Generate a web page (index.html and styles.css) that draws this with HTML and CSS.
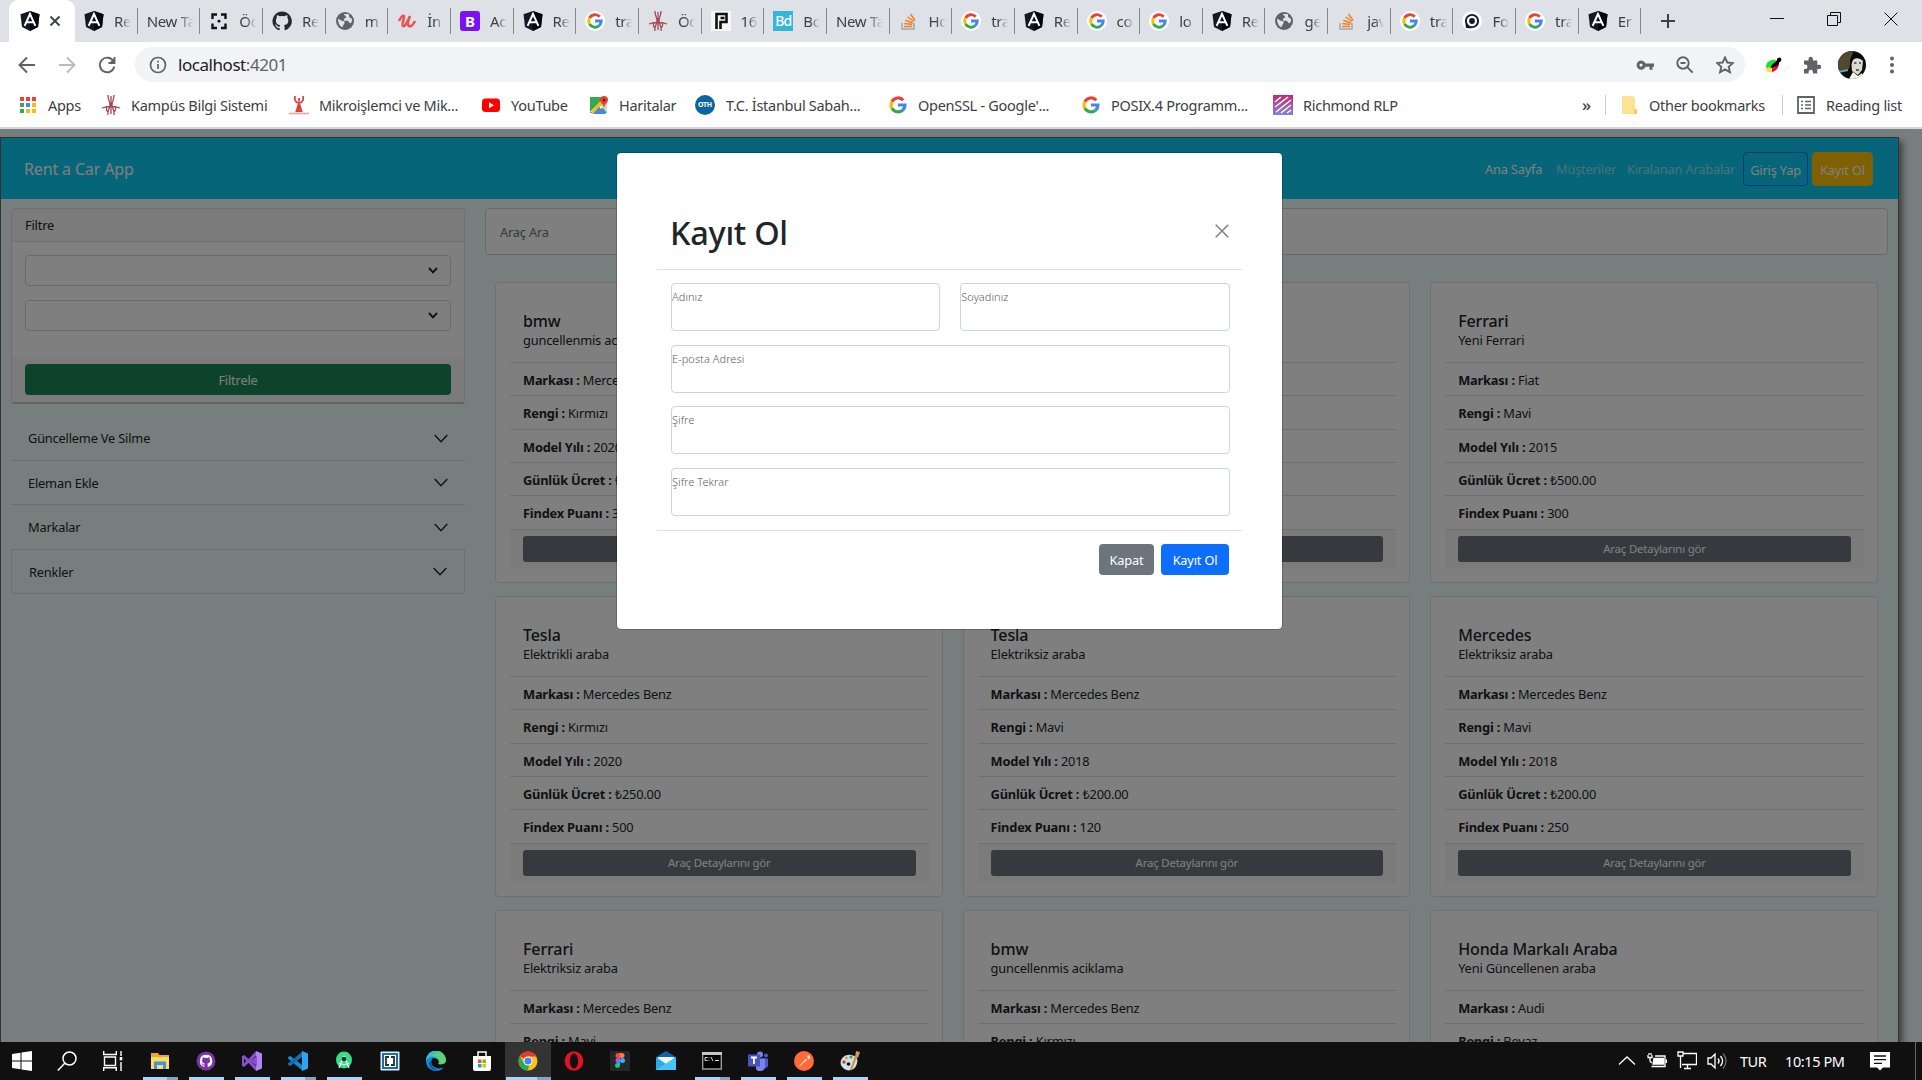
FILE: index.html
```html
<!DOCTYPE html>
<html lang="tr">
<head>
<meta charset="utf-8">
<title>Rent a Car App</title>
<link rel="stylesheet" href="styles.css">
</head>
<body>
<svg class="defs" aria-hidden="true">
  <symbol id="angular" viewBox="0 0 20 20"><path d="M10 0 19.5 3.3 18 16 10 20 2 16 .5 3.3z" fill="#111a26"/><path d="M10 0v20l8-4 1.500-12.700z" fill="#03060e"/><path d="M4.600 14.800 10 3l5.400 11.800M6.800 11.300h6.400" fill="none" stroke="#fff" stroke-width="2"/></symbol>
  <symbol id="google" viewBox="0 0 20 20"><g fill="none" stroke-width="3.200"><path d="M15.300 5.300A7 7 0 0 0 3.900 6.700" stroke="#ea4335"/><path d="M3.900 6.700a7 7 0 0 0 0 6.600" stroke="#fbbc05"/><path d="M3.900 13.300a7 7 0 0 0 10.700 1.900" stroke="#34a853"/><path d="M10 10h7a7 7 0 0 1-2.400 5.200" stroke="#4285f4"/></g></symbol>
  <symbol id="globe" viewBox="0 0 20 20"><circle cx="10" cy="10" r="9" fill="#5f6368"/><path d="M3 8c2 0 3 2 5 2s2 2 1 3-1 3-2 3-4-3-4-8zM9 3c0 2 2 1 2 3s-3 1-2 3 3 0 4 1 2 3 3 2 1-3 1-4-3-1-3-3 0-2-1-2z" fill="#dee1e6"/></symbol>
  <symbol id="campus" viewBox="0 0 20 20"><path d="M7 0c0 5 2 6 2 10s-3 5-2 10M13 0c0 5-2 6-2 10s3 5 2 10M10 1v18M1 13c5-2 13-2 18 0M6 11c-1 3-1 5 1 6M14 11c1 3 1 5-1 6" fill="none" stroke="#a54552" stroke-width="1.300"/></symbol>
  <symbol id="stack" viewBox="0 0 20 20"><path d="M3 12v6h12v-6" fill="none" stroke="#a7a9ac" stroke-width="1.600"/><path d="M5 15.500h8M5.300 12.500l8 1M6.300 9.300l7.500 2.700M8.600 6l6.400 4.500M11.500 3l4.500 6.500" stroke="#f48024" stroke-width="1.500"/></symbol>
  <symbol id="github" viewBox="0 0 20 20"><path d="M10 .5a9.600 9.600 0 0 0-3 18.700c.5.100.6-.2.6-.5v-1.800c-2.600.5-3.200-1.200-3.200-1.200-.5-1.200-1.100-1.500-1.100-1.500-.9-.6.100-.6.100-.6 1 .1 1.500 1 1.500 1 .9 1.500 2.300 1.100 2.800.8.100-.6.300-1.100.6-1.300-2.100-.3-4.400-1.100-4.400-4.700 0-1 .4-1.900 1-2.600-.1-.2-.4-1.200.1-2.500 0 0 .8-.3 2.700 1a9 9 0 0 1 4.800 0c1.900-1.300 2.700-1 2.700-1 .5 1.300.2 2.300.1 2.500.6.700 1 1.600 1 2.600 0 3.600-2.300 4.400-4.400 4.700.4.300.7.900.7 1.800v2.800c0 .3.200.6.700.5A9.600 9.600 0 0 0 10 .5z"/></symbol>
  <symbol id="chev" viewBox="0 0 14 9"><path d="M.7 1 7 7.800 13.300 1" fill="none" stroke="#212529" stroke-width="1.400"/></symbol>
  <symbol id="caret" viewBox="0 0 10 7"><path d="M1 1l4 4.300L9 1" fill="none" stroke="#212529" stroke-width="1.900"/></symbol>
</svg>

<header class="browser">
  <div class="tabs">
    <div class="tab active"><svg class="fav"><use href="#angular"/></svg><svg class="tabx" viewBox="0 0 12 12"><path d="M1.500 1.500l9 9M10.500 1.500l-9 9"/></svg></div>
    <div class="tab"><svg class="fav"><use href="#angular"/></svg><span>Re</span></div>
    <div class="tab bare"><span>New Ta</span></div>
    <div class="tab"><svg class="fav" viewBox="0 0 20 20"><path d="M8 3.500H3.500V8M12 3.500h4.500V8M8 17H3.500v-4.500M12 17h4.500v-4.500" fill="none" stroke="#111" stroke-width="2.400"/><circle cx="10" cy="10.200" r="1.400"/></svg><span>Öd</span></div>
    <div class="tab"><svg class="fav" fill="#24292e"><use href="#github"/></svg><span>Re</span></div>
    <div class="tab"><svg class="fav"><use href="#globe"/></svg><span>m</span></div>
    <div class="tab"><svg class="fav" viewBox="0 0 20 20"><path d="M2 10c2-4 4-6 5-5s-3 9-1 10 5-5 7-10c-2 5-3 9-1 10s4-1 6-5" fill="none" stroke="#ec5252" stroke-width="2.600"/></svg><span>İn</span></div>
    <div class="tab"><b class="fav sq boot">B</b><span>Ac</span></div>
    <div class="tab"><svg class="fav"><use href="#angular"/></svg><span>Re</span></div>
    <div class="tab"><svg class="fav disc"><use href="#google"/></svg><span>tra</span></div>
    <div class="tab"><svg class="fav"><use href="#campus"/></svg><span>Öd</span></div>
    <div class="tab"><svg class="fav" viewBox="0 0 20 20"><path fill="#f6f6f6" d="M0 0h20v20H0z"/><path d="M5.500 18V3h10v8h-6v7M9.500 7h4" fill="none" stroke="#111" stroke-width="2.600"/></svg><span>16</span></div>
    <div class="tab"><b class="fav sq bd">Bd</b><span>Bo</span></div>
    <div class="tab bare"><span>New Ta</span></div>
    <div class="tab"><svg class="fav"><use href="#stack"/></svg><span>Ho</span></div>
    <div class="tab"><svg class="fav disc"><use href="#google"/></svg><span>tra</span></div>
    <div class="tab"><svg class="fav"><use href="#angular"/></svg><span>Re</span></div>
    <div class="tab"><svg class="fav disc"><use href="#google"/></svg><span>co</span></div>
    <div class="tab"><svg class="fav disc"><use href="#google"/></svg><span>lo</span></div>
    <div class="tab"><svg class="fav"><use href="#angular"/></svg><span>Re</span></div>
    <div class="tab"><svg class="fav"><use href="#globe"/></svg><span>ge</span></div>
    <div class="tab"><svg class="fav"><use href="#stack"/></svg><span>jav</span></div>
    <div class="tab"><svg class="fav disc"><use href="#google"/></svg><span>tra</span></div>
    <div class="tab"><svg class="fav disc" viewBox="0 0 20 20"><circle cx="10" cy="10" r="6.800" fill="none" stroke="#111b30" stroke-width="2.200"/><circle cx="10" cy="10" r="3.200" fill="#111b30"/><path d="M3 13v5h7" fill="#111b30"/></svg><span>Fo</span></div>
    <div class="tab"><svg class="fav disc"><use href="#google"/></svg><span>tra</span></div>
    <div class="tab"><svg class="fav"><use href="#angular"/></svg><span>Er</span></div>
    <svg class="plus" viewBox="0 0 16 16"><path d="M8 1v14M1 8h14"/></svg>
    <div class="winctl">
      <svg viewBox="0 0 14 14"><path d="M0 6.500h14"/></svg>
      <svg viewBox="0 0 14 14"><path d="M.5 3.500h10v10H.5zM3.500 3.500V.5h10v10h-3"/></svg>
      <svg viewBox="0 0 14 14"><path d="M.5.5l13 13M13.500.5l-13 13"/></svg>
    </div>
  </div>
  <div class="toolbar">
    <svg viewBox="0 0 18 18"><path d="M17 9H2M9 1.500 1.500 9 9 16.500"/></svg>
    <svg class="off" viewBox="0 0 18 18"><path d="M1 9h15M9 1.500 16.500 9 9 16.500"/></svg>
    <svg viewBox="0 0 18 18"><path d="M15.300 5A7.300 7.300 0 1 0 16.300 10.500M16.500 1v6h-6"/><path d="M16.800 1.500v5.700h-5.700z" fill="#5f6368" stroke="none"/></svg>
    <div class="omnibox">
      <svg viewBox="0 0 18 18"><circle cx="9" cy="9" r="7.500"/><path d="M9 8v5M9 4.800v1.700"/></svg>
      <p>localhost<span>:4201</span></p>
      <svg class="solid" viewBox="0 0 18 18"><path d="M9.500 7.500H18v3.200h-1.500v3h-3v-3h-4a4.600 4.600 0 1 1 0-3.200zM5 7.500a1.600 1.600 0 1 0 0 3.200 1.600 1.600 0 0 0 0-3.200z" fill-rule="evenodd"/></svg>
      <svg viewBox="0 0 18 18"><circle cx="7" cy="7" r="5.700"/><path d="M11.200 11.200l5.500 5.500M4.500 7h5" /></svg>
      <svg viewBox="0 0 18 18"><path d="M9 1.500l2.300 5 5.500.600-4.100 3.700 1.200 5.400L9 13.400l-4.900 2.800 1.200-5.400L1.200 7.100l5.500-.6z"/></svg>
    </div>
    <svg class="ext" viewBox="0 0 18 18"><path d="M2 11C2 5 8 3 12 4l-2 7-6 3z" fill="#1be03a"/><path d="M8 10c2-4 7-6 7-3 0 5-3 8-7 9z" fill="#f30a2c"/><path d="M1 13l4-2 3 3v2l-4 0z" fill="#fd3"/><path d="M7 12c0-4 4-5 6-8a2.200 2.200 0 1 1 2.500 2c-1 4-4 5-6 5z" fill="#000"/></svg>
    <svg class="puzzle" viewBox="0 0 18 18"><path d="M1 4.500h4.500V3a2.200 2.200 0 0 1 4.400 0v1.500h4.400v4.200H16a2.200 2.200 0 0 1 0 4.400h-1.700V17.500H10V16a2.200 2.200 0 0 0-4.400 0v1.500H1V13h1.300a2.200 2.200 0 0 0 0-4.400H1z"/></svg>
    <svg class="avatar" viewBox="0 0 28 28"><clipPath id="av"><circle cx="14" cy="14" r="14"/></clipPath><g clip-path="url(#av)"><path fill="#0b0d0d" d="M0 0h28v28H0z"/><path d="M0 0h15L11 18 0 20z" fill="#50482f"/><path d="M13 8c3-4 10-3 12 2l-1 9-4 5-6-4z" fill="#dcd9cf"/><path d="M11 28l4-7 5 4 4-3v6z" fill="#f4f4f2"/><path d="M12 10c2-12 13-9 15 1-5-4-9-5-12-2l-2 5z" fill="#060808"/><path d="M16 12h2.500M21 12h2M18 19h3" stroke="#666259"/><path d="M0 21l10-2" stroke="#6ba4ac" stroke-width="2"/></g></svg>
    <svg class="dots" viewBox="0 0 6 18"><circle cx="3" cy="2.500" r="2"/><circle cx="3" cy="9" r="2"/><circle cx="3" cy="15.500" r="2"/></svg>
  </div>
  <div class="bookmarks">
    <div><svg class="apps" viewBox="0 0 16 16"><path fill="#ea4335" d="M0 0h4v4H0zM6 0h4v4H6zM12 0h4v4h-4z"/><path fill="#34a853" d="M0 6h4v4H0zM0 12h4v4H0z"/><path fill="#4285f4" d="M6 6h4v4H6z"/><path fill="#fbbc05" d="M12 6h4v4h-4zM6 12h4v4H6zM12 12h4v4h-4z"/></svg>Apps</div>
    <div><svg><use href="#campus"/></svg>Kampüs Bilgi Sistemi</div>
    <div><svg viewBox="0 0 20 20"><path d="M6 1c-1 4 1 7 4 7s5-3 4-7M10 3v3M10 8v8M7.500 16 10 8l2.500 8z" fill="none" stroke="#d9403f" stroke-width="1.800"/><path d="M0 18.500h20" stroke="#f1a5a5" stroke-width="1.600"/></svg>Mikroişlemci ve Mik...</div>
    <div><svg viewBox="0 0 20 20"><rect x="1" y="3.500" width="18" height="13.500" rx="3.500" fill="#f00"/><path d="M8 7.300v6l5-3z" fill="#fff"/></svg>YouTube</div>
    <div><svg viewBox="0 0 20 20"><path fill="#34a853" d="M1 2h17v16H1z"/><path fill="#fff" d="M1 17 16 2l4 4L8 18z"/><path fill="#fbbc05" d="M14 3 2 17l2 2L17 6z"/><path fill="#4285f4" d="M4 19l6-7 7 7z"/><path fill="#d5d5d5" d="M12 11l6-5v12z"/><path d="M15 14c0-5-4-6-4-9a4 4 0 0 1 8 0c0 3-4 4-4 9z" fill="#ea4335"/><circle cx="15" cy="5" r="1.500" fill="#811"/></svg>Haritalar</div>
    <div><b class="oth">OTH</b>T.C. İstanbul Sabah...</div>
    <div><svg><use href="#google"/></svg>OpenSSL - Google'...</div>
    <div><svg><use href="#google"/></svg>POSIX.4 Programm...</div>
    <div><svg viewBox="0 0 20 20"><linearGradient id="rg" x2="0" y2="1"><stop stop-color="#c8286d"/><stop offset="1" stop-color="#7d85dd"/></linearGradient><path fill="url(#rg)" d="M0 0h20v20H0z"/><path d="M2 7l6-5M2 12 15 2M3 17 18 5M8 18l10-8M14 18l4-3" stroke="#fff" stroke-width="1.500"/></svg>Richmond RLP</div>
    <div class="more">»</div>
    <div class="rule"><svg viewBox="0 0 20 20"><path d="M3 1h11l2 2v10l2 2v4H3z" fill="#fde293"/><path d="M15 14h3v5h-3z" fill="#f7cf5c"/></svg>Other bookmarks</div>
    <div class="rule"><svg viewBox="0 0 20 20"><path d="M2 2h16v16H2z" fill="none" stroke="#5f6368" stroke-width="1.800"/><path d="M5 6.500h2M9 6.500h6M5 10h2M9 10h6M5 13.500h2M9 13.500h6" stroke="#5f6368" stroke-width="1.500"/></svg>Reading list</div>
  </div>
</header>

<main class="page">
  <div class="app">
    <nav class="navbar">
      <a class="brand">Rent a Car App</a>
      <a class="link on">Ana Sayfa</a><a class="link">Müşteriler</a><a class="link wide">Kiralanan Arabalar</a>
      <a class="login">Giriş Yap</a><a class="signup">Kayıt Ol</a>
    </nav>
    <div class="columns">
      <aside>
        <section class="filter">
          <h2>Filtre</h2>
          <div class="selects"><div class="select"><svg><use href="#caret"/></svg></div><div class="select"><svg><use href="#caret"/></svg></div></div>
          <footer><div class="btn-green">Filtrele</div></footer>
        </section>
        <div class="accordion">
          <div>Güncelleme Ve Silme<svg><use href="#chev"/></svg></div>
          <div>Eleman Ekle<svg><use href="#chev"/></svg></div>
          <div>Markalar<svg><use href="#chev"/></svg></div>
          <div class="boxed">Renkler<svg><use href="#chev"/></svg></div>
        </div>
      </aside>
      <section class="results">
        <div class="search">Araç Ara</div>
        <div class="cards">
          <article><h3>bmw</h3><p>guncellenmis aciklama</p><ul><li><b>Markası :</b> Mercedes Benz</li><li><b>Rengi :</b> Kırmızı</li><li><b>Model Yılı :</b> 2020</li><li><b>Günlük Ücret :</b> ₺250.00</li><li><b>Findex Puanı :</b> 300</li></ul><footer><div class="btn-gray">Araç Detaylarını gör</div></footer></article>
          <article><h3></h3><p></p><ul><li></li><li></li><li></li><li></li><li></li></ul><footer><div class="btn-gray"></div></footer></article>
          <article><h3>Ferrari</h3><p>Yeni Ferrari</p><ul><li><b>Markası :</b> Fiat</li><li><b>Rengi :</b> Mavi</li><li><b>Model Yılı :</b> 2015</li><li><b>Günlük Ücret :</b> ₺500.00</li><li><b>Findex Puanı :</b> 300</li></ul><footer><div class="btn-gray">Araç Detaylarını gör</div></footer></article>
          <article><h3>Tesla</h3><p>Elektrikli araba</p><ul><li><b>Markası :</b> Mercedes Benz</li><li><b>Rengi :</b> Kırmızı</li><li><b>Model Yılı :</b> 2020</li><li><b>Günlük Ücret :</b> ₺250.00</li><li><b>Findex Puanı :</b> 500</li></ul><footer><div class="btn-gray">Araç Detaylarını gör</div></footer></article>
          <article><h3>Tesla</h3><p>Elektriksiz araba</p><ul><li><b>Markası :</b> Mercedes Benz</li><li><b>Rengi :</b> Mavi</li><li><b>Model Yılı :</b> 2018</li><li><b>Günlük Ücret :</b> ₺200.00</li><li><b>Findex Puanı :</b> 120</li></ul><footer><div class="btn-gray">Araç Detaylarını gör</div></footer></article>
          <article><h3>Mercedes</h3><p>Elektriksiz araba</p><ul><li><b>Markası :</b> Mercedes Benz</li><li><b>Rengi :</b> Mavi</li><li><b>Model Yılı :</b> 2018</li><li><b>Günlük Ücret :</b> ₺200.00</li><li><b>Findex Puanı :</b> 250</li></ul><footer><div class="btn-gray">Araç Detaylarını gör</div></footer></article>
          <article><h3>Ferrari</h3><p>Elektriksiz araba</p><ul><li><b>Markası :</b> Mercedes Benz</li><li><b>Rengi :</b> Mavi</li></ul></article>
          <article><h3>bmw</h3><p>guncellenmis aciklama</p><ul><li><b>Markası :</b> Mercedes Benz</li><li><b>Rengi :</b> Kırmızı</li></ul></article>
          <article><h3>Honda Markalı Araba</h3><p>Yeni Güncellenen araba</p><ul><li><b>Markası :</b> Audi</li><li><b>Rengi :</b> Beyaz</li></ul></article>
        </div>
      </section>
    </div>
  </div>
  <div class="backdrop"></div>
  <div class="modal">
    <div class="modal-head"><h1>Kayıt Ol</h1><svg viewBox="0 0 14 14"><path d="M.7.7l12.600 12.600M13.300.7.7 13.300"/></svg></div>
    <div class="fields">
      <div class="field">Adınız</div><div class="field">Soyadınız</div>
      <div class="field full">E-posta Adresi</div>
      <div class="field full">Şifre</div>
      <div class="field full">Şifre Tekrar</div>
    </div>
    <div class="modal-foot"><div class="close">Kapat</div><div class="save">Kayıt Ol</div></div>
  </div>
</main>

<footer class="taskbar">
  <div class="slot start"><svg viewBox="0 0 20 20"><path d="M0 3l8.500-1.200v7.700H0zM9.500 1.600 20 0v9.500H9.500zM0 10.500h8.500v7.700L0 17zM9.500 10.500H20V20L9.500 18.400z" fill="#fff"/></svg></div>
  <div class="slot start"><svg viewBox="0 0 20 20"><circle cx="12.500" cy="7.500" r="6.500" fill="none" stroke="#fff" stroke-width="1.500"/><path d="M8 12 .8 19.500" stroke="#fff" stroke-width="1.500"/></svg></div>
  <div class="slot view"><svg viewBox="0 0 20 20"><path d="M.7 0v3.500h12.600V0M1.500 6h11v8.500h-11zM.7 20v-3.300h12.600V20M18 0v5M18 11v9" fill="none" stroke="#fff" stroke-width="1.400"/><path d="M16.700 6h2.600v3.300h-2.600z" fill="#fff"/></svg></div>
  <div class="slot run multi"><svg viewBox="0 0 20 20"><path d="M1 2h7l1.500 2H19v14H1z" fill="#e8a820"/><path d="M1 6h18v12H1z" fill="#ffd868"/><path d="M4 18v-7.500h12V18h-3v-4H7v4z" fill="#3f93da"/></svg></div>
  <div class="slot run"><svg viewBox="0 0 20 20"><circle cx="10" cy="10" r="9.500" fill="#7a33a5"/><g fill="#fff" transform="translate(3.500 3.500) scale(.65)"><use href="#github" width="20" height="20"/></g></svg></div>
  <div class="slot run"><svg viewBox="0 0 20 20"><path d="M14 0l6 2.500v15L14 20z" fill="#b583ee"/><path d="M15 5v10L8 10zM14 0 6.500 8 2 4 0 5v10l2 1 4.500-4L14 20v-5L8 10l6-5zM2 7.500 4 10l-2 2.500z" fill="#8750cf" fill-rule="evenodd"/></svg></div>
  <div class="slot run multi"><svg viewBox="0 0 20 20"><path d="M0 6.500l2-1.700 13 10V20L0 7.500z" fill="#168bd2"/><path d="M0 13.500l2 1.700 13-10V0L0 12.500z" fill="#0f6fb5"/><path d="M14 0l6 2.500v15L14 20z" fill="#2ca7ef"/></svg></div>
  <div class="slot run"><svg viewBox="0 0 20 20"><ellipse cx="10" cy="9" rx="8" ry="8.500" fill="#3ddc84"/><path d="M10 5 5 17M10 5l5 12M5 12c3 2 7 2 10 0" fill="none" stroke="#e7eef5" stroke-width="1.300"/><circle cx="10" cy="8" r="2.300" fill="#0a3547"/></svg></div>
  <div class="slot"><svg viewBox="0 0 20 20"><rect x=".5" y=".5" width="19" height="19" rx="1" fill="#dff0fa"/><path d="M2 2h16v16H2z" fill="#1a6da5"/><path d="M4 4h12v12H4z" fill="#fff"/><path d="M9 6H6v8h3M11 6h3v8h-3" fill="none" stroke="#26323a" stroke-width="1.800"/></svg></div>
  <div class="slot"><svg viewBox="0 0 20 20"><path d="M0 10A10 10 0 0 1 20 9c0 4-4 5-8 4 2-2 0-6-4-6C4 7 1 9 0 10z" fill="#35c1c9"/><path d="M12 1c5 1 8 4 8 8 0 3-3 5-7 4 2-5-1-9-8-8z" fill="#60d36b"/><path d="M0 10c1-3 5-5 9-4-4 1-5 6-2 9s8 3 11 1a10 10 0 0 1-18-6z" fill="#1787d8"/><path d="M6 9c-2 5 2 10 8 10-5 2-12-2-11-8z" fill="#1559a8"/></svg></div>
  <div class="slot"><svg viewBox="0 0 20 20"><path d="M6 5V1h8v4" fill="none" stroke="#fff" stroke-width="1.500"/><path d="M1 5h18v13a2 2 0 0 1-2 2H3a2 2 0 0 1-2-2z" fill="#fff"/><path fill="#f25022" d="M6 8.500h3.500V12H6z"/><path fill="#7fba00" d="M10.500 8.500H14V12h-3.500z"/><path fill="#00a4ef" d="M6 13h3.500v3.500H6z"/><path fill="#ffb900" d="M10.500 13H14v3.500h-3.500z"/></svg></div>
  <div class="slot run multi current"><svg viewBox="0 0 20 20"><circle cx="10" cy="10" r="9.500" fill="#fbc116"/><path d="M10 10 1.800 5.200A9.500 9.500 0 0 1 18.300 5.500H10z" fill="#e33b2e"/><path d="M10 19.500A9.500 9.500 0 0 1 1.800 5.200L6 12l5 2z" fill="#2da94f"/><circle cx="10" cy="10" r="4.500" fill="#fff"/><circle cx="10" cy="10" r="3.500" fill="#4285f4"/></svg></div>
  <div class="slot"><svg viewBox="0 0 20 20"><ellipse cx="10" cy="10" rx="9.300" ry="9.800" fill="#e01326"/><ellipse cx="10" cy="10" rx="4.200" ry="7.500" fill="#101010"/></svg></div>
  <div class="slot"><svg viewBox="0 0 20 20"><rect width="20" height="20" rx="1.500" fill="#262626"/><path d="M10 2H8a2.500 2.500 0 0 0 0 5h2z" fill="#f24e1e"/><path d="M10 2h2a2.500 2.500 0 0 1 0 5h-2z" fill="#ff7262"/><path d="M10 7H8a2.500 2.500 0 0 0 0 5h2z" fill="#a259ff"/><circle cx="12.500" cy="9.500" r="2.500" fill="#1abcfe"/><path d="M10 12H8a2.500 2.500 0 1 0 2 2.500z" fill="#0acf83"/></svg></div>
  <div class="slot"><svg viewBox="0 0 20 20"><path d="M0 6l10-6 10 6v4H0z" fill="#0f62b0"/><path d="M2 6h16v8H2z" fill="#f3f3f3"/><path d="M0 6v13h20V6l-10 7z" fill="#29a8ea"/><path d="M0 19 20 6v13z" fill="#44c5f5"/></svg></div>
  <div class="slot run multi"><svg viewBox="0 0 20 20"><path d="M.7 2h18.600v16H.7z" fill="#000" stroke="#999" stroke-width="1.400"/><path d="M0 1h20v3H0z" fill="#c6c6c6"/><path d="M5.500 6.500H3v3h2.500M7 6.500v.8M7 9v.7M9 6l2 4M13 9.500h4" stroke="#ddd" fill="none"/></svg></div>
  <div class="slot run"><svg viewBox="0 0 20 20"><circle cx="12" cy="3.500" r="3" fill="#7b83eb"/><circle cx="18" cy="4.500" r="2" fill="#5059c9"/><path d="M14 7.500h6.500v6a4 4 0 0 1-5 3.500z" fill="#5059c9"/><path d="M8 7.500h9V14a5 5 0 0 1-9 4z" fill="#7b83eb"/><path d="M0 3.500h12v12H0z" fill="#4b53bc"/><path d="M3 6.500h6M6 6.500V13" stroke="#fff" stroke-width="1.800"/></svg></div>
  <div class="slot run"><svg viewBox="0 0 20 20"><circle cx="10" cy="10" r="10" fill="#ff6c37"/><path d="M4.500 15.500 12 8l1 1-6.500 5.500zM13.500 4.500a1.900 1.900 0 1 1 .1 3.500z" fill="#fff" fill-opacity=".85"/></svg></div>
  <div class="slot run"><svg viewBox="0 0 20 20"><path d="M1 14C-1 8 5 3 11 4s8 5 5 11-12 6-15-1z" fill="#c9e3f1"/><circle cx="4" cy="11" r="1.700" fill="#d93a31"/><circle cx="6.500" cy="7" r="1.600" fill="#e8a526"/><circle cx="11" cy="6" r="1.600" fill="#33a64b"/><circle cx="8.500" cy="13" r="1.800" fill="#101010"/><path d="M11 19 16 5" stroke="#dc8d3a" stroke-width="2.200"/><path d="M15 6l1-6 4 1-2 6z" fill="#c99a66"/></svg></div>
  <div class="tray">
    <svg viewBox="0 0 20 20"><path d="M2 13.500 10 6l8 7.500"/></svg>
    <svg viewBox="0 0 20 20"><path d="M7 7.500h9.500v5.500H6z" fill="#fff"/><path d="M4.500 15.500h13.500v-10.500H8M19.500 8.500v3.500M1 4v2.500h4V4M3 7v3q0 1.500 2 1.500M2 2v2M4 2v2"/></svg>
    <svg viewBox="0 0 20 20"><path d="M6 2.500h13.500v11H5M1 1h5v4H1zM3.500 5v12M7 17.500h7M10.500 14v3"/></svg>
    <svg viewBox="0 0 20 20"><path d="M1 7v6h3l4 4V3L4 7zM11 7.500c1.300 1.500 1.300 3.500 0 5M13.500 5c2.500 3 2.500 7 0 10"/><path d="M16 2.500c4 4.500 4 10.500 0 15" stroke-opacity=".4"/></svg>
    <span class="lang">TUR</span><span class="clock">10:15 PM</span>
    <svg class="note" viewBox="0 0 20 20"><path d="M0 1h20v15.500h-7l-3 3-3-3H0z" fill="#fff" stroke="none"/><path d="M4 5h12M4 8.700h12M4 12.400h8" stroke="#101010"/></svg>
    <i></i>
  </div>
</footer>
</body>
</html>
```
FILE: styles.css
```css
* { box-sizing: border-box; margin: 0; padding: 0; }
body {
  width: 1922px; height: 1080px; overflow: hidden;
  display: flex; flex-direction: column;
  font: 12.800px/20px "Noto Sans", "Open Sans", sans-serif;
  letter-spacing: -.18px; color: #212529; background: #fff;
}
.defs { position: absolute; width: 0; height: 0; }
svg { display: block; flex: none; }
ul { list-style: none; }

/* Browser chrome */
.browser { height: 129px; flex: none; border-bottom: 2px solid #d4d6da; color: #3c4043; }
.tabs { height: 42px; display: flex; align-items: center; background: #dee1e6; padding-left: 9px; }
.tab { width: 62.660px; height: 26px; flex: none; display: flex; align-items: center; padding-left: 9px; border-right: 1px solid #85888d; font-size: 15px; letter-spacing: -.3px; }
.tab span { width: 17px; margin-left: 10px; overflow: hidden; white-space: nowrap; -webkit-mask-image: linear-gradient(90deg, #000 40%, transparent); }
.tab.bare span { width: 47px; margin-left: 0; -webkit-mask-image: linear-gradient(90deg, #000 65%, transparent); }
.tab.active { width: 66px; height: 42px; background: #fff; border: 0; border-radius: 9px 9px 0 0; padding-left: 11px; }
.fav { width: 20px; height: 20px; }
.disc { background: #fff; border-radius: 50%; padding: 1px; }
.sq { flex: none; color: #fff; text-align: center; line-height: 20px; }
.boot { background: #7a12f5; border-radius: 3px; font-size: 15px; }
.bd { background: #35b5d8; font-size: 14px; font-weight: 500; letter-spacing: -1px; }
.tabx { width: 12px; height: 12px; margin-left: 9px; stroke: #3c4043; stroke-width: 1.800; }
.plus { width: 16px; height: 16px; margin-left: 19px; stroke: #3c4043; stroke-width: 2; }
.winctl { display: flex; gap: 43px; margin: 0 24px 5px auto; }
.winctl svg { width: 14px; height: 14px; fill: none; stroke: #111; stroke-width: 1; }
.toolbar { height: 45px; display: flex; align-items: center; padding-left: 18px; }
.toolbar svg { width: 18px; height: 18px; margin-right: 22px; fill: none; stroke: #5f6368; stroke-width: 1.900; }
.toolbar .off { stroke: #b9bbbe; }
.toolbar .omnibox { width: 1610px; height: 35px; margin: 0 19px 0 -3px; padding-left: 14px; border-radius: 18px; background: #f1f3f4; display: flex; align-items: center; }
.omnibox svg:first-child { margin-right: 11px; stroke-width: 1.700; }
.omnibox p { width: 1458px; flex: none; color: #202124; font-size: 17px; letter-spacing: -.45px; }
.omnibox p span { color: #5f6368; }
.toolbar .omnibox .solid, .toolbar .puzzle, .toolbar .dots { fill: #5f6368; stroke: none; }
.toolbar .ext { stroke: none; margin-right: 21px; }
.toolbar .puzzle { margin-right: 17px; }
.toolbar .avatar { width: 28px; height: 28px; stroke: none; margin-right: 23px; }
.toolbar .dots { width: 6px; margin: 0; }
.toolbar .omnibox svg:last-child { margin: 0; }
.bookmarks { height: 35px; display: grid; align-items: center; padding-left: 18px; font-size: 14.500px; letter-spacing: -.28px; white-space: nowrap;
  grid-template-columns: 83px 188px 192px 108px 106px 193px 193px 192px 309px 23px 177px 150px; }
.bookmarks div { display: flex; align-items: center; }
.bookmarks svg { width: 20px; height: 20px; margin-right: 10px; }
.bookmarks .apps { width: 16px; height: 16px; margin: 0 12px 0 2px; }
.oth { width: 20px; height: 20px; margin-right: 11px; border-radius: 50%; background: #0d65a0; color: #fff; font-size: 7px; text-align: center; }
.bookmarks .more { font-weight: 500; font-size: 17px; }
.bookmarks .rule { height: 20px; border-left: 1px solid #c9cbce; padding-left: 13px; }
.bookmarks .rule svg { margin-right: 10px; }

/* Page */
.page { position: relative; height: 913px; overflow: hidden; padding-top: 8px; background: #ecfefa; }
.app { width: 1899px; height: 920px; border: 1px solid #666; box-shadow: 4px 4px 6px #888; background: #ecfefa; }
.navbar { height: 61px; display: flex; align-items: center; padding: 0 25px 0 23px; background: #0dcaf0; }
.brand { margin-right: auto; color: #fff; font-size: 16px; letter-spacing: -.15px; }
.link { width: 71px; color: rgba(255,255,255,.55); }
.link.on { color: #fff; }
.link.wide { width: 116px; }
.login, .signup { height: 34px; line-height: 34px; text-align: center; border-radius: 4px; color: #fff; border: 1px solid #0d6efd; width: 65px; margin-right: 4px; }
.signup { width: 61px; margin: 0; border-color: #ffc107; background: #ffc107; }
.columns { display: flex; padding: 9px 0 0 10px; }
aside { width: 454px; margin-right: 20px; }
.filter { height: 196px; border: 1px solid #dfdfdf; border-bottom: 2px solid #c5c5c5; border-radius: 4px; background: #fff; }
.filter h2 { height: 33px; padding-left: 13px; font: inherit; line-height: 32px; background: #f7f7f7; border-bottom: 1px solid #dfdfdf; }
.selects { height: 115px; padding: 13px; display: grid; align-content: start; gap: 14px; }
.select { height: 31px; border: 1px solid #ced4da; border-radius: 4px; display: flex; align-items: center; justify-content: flex-end; padding-right: 12px; }
.select svg { width: 10px; height: 7px; }
.filter footer { height: 45px; padding: 7px 13px; background: #f7f7f7; }
.btn-green { height: 31px; line-height: 32px; border-radius: 4px; background: #198754; color: #fff; text-align: center; }
.accordion { padding-top: 12px; }
.accordion div { height: 44.500px; display: flex; justify-content: space-between; align-items: center; padding: 1px 17px 0; border-bottom: 1px solid #dbe0df; }
.accordion svg { width: 14px; height: 9px; }
.accordion .boxed { border: 1px solid #dbe0df; border-top: 0; border-radius: 0 0 4px 4px; height: 44.500px; }
.search { width: 1403px; height: 47px; line-height: 46px; padding-left: 14px; border: 1px solid #ced4da; border-radius: 4px; background: #fff; color: #6c757d; }
.cards { display: grid; grid-template-columns: repeat(3, 447.600px); gap: 13.500px 20px; padding: 27px 0 0 10px; }
article { height: 300.500px; border: 1px solid #dfdfdf; border-radius: 4px; background: #fff; padding: 26px 13px 0 14px; }
article h3 { height: 23px; line-height: 24px; padding-left: 13px; font-size: 16px; font-weight: 500; letter-spacing: -.12px; }
article p { height: 16px; line-height: 16px; padding-left: 13px; margin-bottom: 14px; }
article li { height: 33.350px; padding: 7px 13px 0; border-top: 1px solid #dfdfdf; }
article footer { height: 40px; padding: 6px 13px; border-top: 1px solid #dfdfdf; background: #f7f7f7; }
.btn-gray { height: 26px; line-height: 26px; border-radius: 3px; background: #6c757d; color: #fff; font-size: 11.400px; text-align: center; }
.backdrop { position: absolute; inset: 0; background: rgba(0,0,0,.5); }

/* Sign-up dialog */
.modal { position: absolute; left: 617px; top: 24px; width: 665px; height: 476px; padding: 40px; background: #fff; border-radius: 4px; outline: 1px solid rgba(0,0,0,.2); }
.modal-head { height: 77px; padding: 0 13px; display: flex; justify-content: space-between; border-bottom: 1px solid #dee2e6; }
.modal-head h1 { font-size: 32.500px; line-height: 40px; font-weight: 500; letter-spacing: -.3px; margin-top: 20px; }
.modal-head svg { width: 14px; height: 14px; margin-top: 31px; fill: none; stroke: #808080; stroke-width: 1.500; }
.fields { display: grid; grid-template-columns: 1fr 1fr; gap: 13.700px 20px; padding: 13px 12.500px 14px 14px; }
.field { height: 48px; border: 1px solid #ced4da; border-radius: 4px; padding-top: 3px; font-size: 11px; font-weight: 300; letter-spacing: .05px; color: #5c5c5c; }
.full { grid-column: 1 / 3; }
.modal-foot { display: flex; justify-content: flex-end; gap: 7px; padding: 13px 13px 0; border-top: 1px solid #dee2e6; color: #fff; text-align: center; line-height: 32px; }
.close, .save { width: 55px; height: 31px; border-radius: 4px; background: #6c757d; }
.save { width: 68px; background: #0d6efd; }

/* Taskbar */
.taskbar { height: 38px; flex: none; display: flex; background: #101010; color: #fff; }
.slot { width: 46px; height: 38px; flex: none; display: flex; align-items: center; justify-content: center; }
.slot svg { width: 20px; height: 20px; }
.start { width: 44.500px; }
.view { width: 48px; }
.run { background: linear-gradient(#a9d5fc, #a9d5fc) bottom / 35px 3px no-repeat; }
.multi { background-image: linear-gradient(90deg, #a9d5fc 70%, #85a5c2 70%); }
.current { background-color: #333; background-size: 45px 3px; }
.tray { flex: 1; display: flex; align-items: center; justify-content: flex-end; font-size: 14.500px; }
.tray svg { width: 20px; height: 20px; margin-right: 10px; fill: none; stroke: #fff; stroke-width: 1.300; }
.lang { width: 28px; margin: 0 17px 0 3px; letter-spacing: -.5px; }
.clock { width: 61px; white-space: nowrap; letter-spacing: -.4px; }
.tray .note { margin: 0 25px 0 24px; }
.tray i { width: 1px; height: 38px; margin-right: 6px; background: #666; }
```
